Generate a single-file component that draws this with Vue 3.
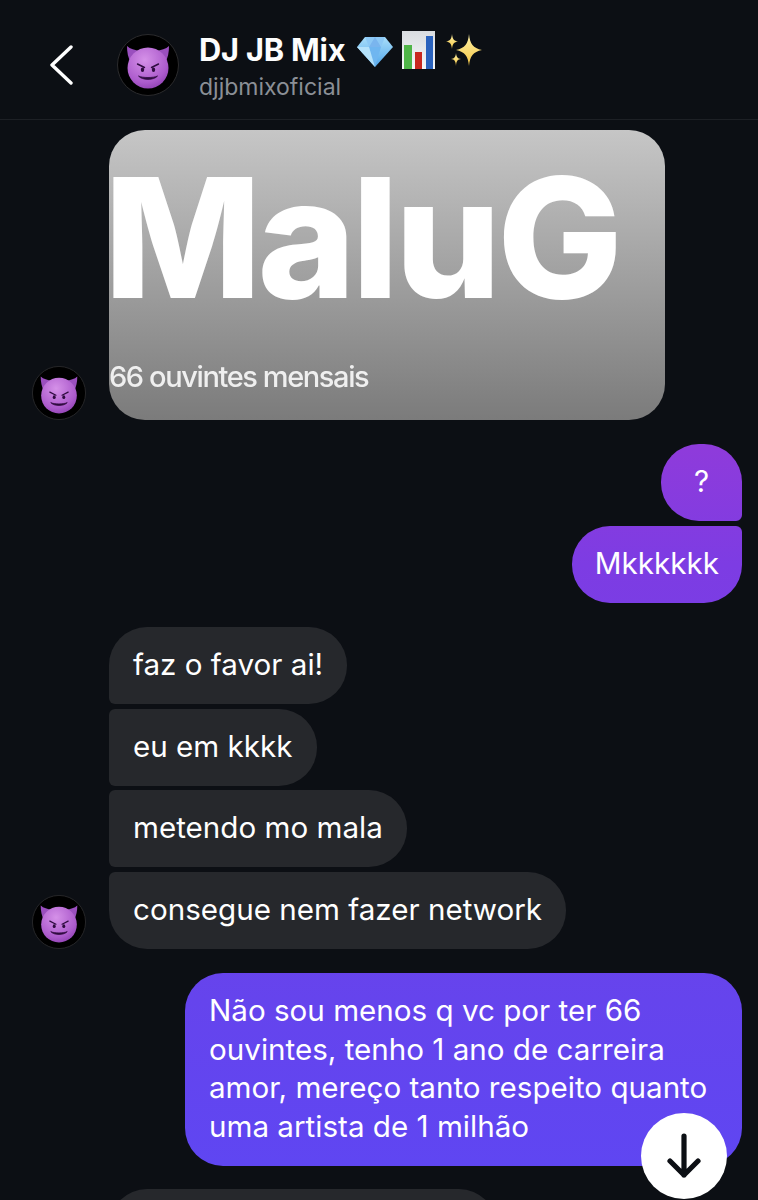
<template>
  <div class="screen">
    <svg class="defs" width="0" height="0" aria-hidden="true">
      <defs>
        <radialGradient id="faceFill" cx="0.42" cy="0.3" r="0.85">
          <stop offset="0" stop-color="#d591e8" />
          <stop offset="0.65" stop-color="#ac5bcc" />
          <stop offset="1" stop-color="#8234a6" />
        </radialGradient>
        <linearGradient id="gemFill" x1="0" y1="0" x2="0" y2="1">
          <stop offset="0" stop-color="#a9defa" />
          <stop offset="1" stop-color="#4fa5ea" />
        </linearGradient>
        <linearGradient id="starFill" x1="0" y1="0" x2="0" y2="1">
          <stop offset="0" stop-color="#fff2a8" />
          <stop offset="1" stop-color="#f5c542" />
        </linearGradient>
        <linearGradient id="chartFill" x1="0" y1="0" x2="0" y2="1">
          <stop offset="0" stop-color="#d9dce0" />
          <stop offset="1" stop-color="#f6f7f8" />
        </linearGradient>
        <symbol id="devil" viewBox="0 0 62 62">
          <circle cx="31" cy="31" r="30.5" fill="#000" stroke="#2b2b2d" />
          <path d="M10 12 C13 15 18 16 23 17 L14 29 C11 24 10 18 10 12Z" fill="#9a4fbe" />
          <path d="M52 12 C49 15 44 16 39 17 L48 29 C51 24 52 18 52 12Z" fill="#9a4fbe" />
          <circle cx="31" cy="34" r="20.5" fill="url(#faceFill)" />
          <path d="M20.500 30 L27.500 33.500 M41.500 30 L34.500 33.500" stroke="#2f0c40" stroke-width="1.400" stroke-linecap="round" />
          <ellipse cx="25.500" cy="35.800" rx="1.700" ry="2.200" fill="#2f0c40" />
          <ellipse cx="36.500" cy="35.800" rx="1.700" ry="2.200" fill="#2f0c40" />
          <path d="M21.500 42 C25 46.500 37 46.500 40.500 42 C37 44 25 44 21.500 42Z" fill="#2f0c40" stroke="#2f0c40" stroke-width="0.800" stroke-linejoin="round" />
        </symbol>
      </defs>
    </svg>

    <header class="topbar">
      <button class="back" type="button" aria-label="Voltar">
        <svg width="24" height="40" viewBox="0 0 24 40" fill="none">
          <path d="M22 2 L3 20 L22 38" stroke="#fff" stroke-width="3.400" stroke-linecap="round" stroke-linejoin="round" />
        </svg>
      </button>
      <svg class="avatar-lg"><use href="#devil" /></svg>
      <div class="who">
        <div class="title-row">
          <span class="title">DJ JB Mix</span>
          <svg class="gem" width="38" height="32" viewBox="0 0 38 32">
            <path d="M9 1 H29 L37 11 L19 31 L1 11Z" fill="url(#gemFill)" />
            <path d="M9 1 L13 11 H25 L29 1Z" fill="#8cc8f5" />
            <path d="M13 11 L19 31 L25 11Z" fill="#6fb6f0" />
            <path d="M1 11 H13 L19 31Z" fill="#b5e2fb" />
            <path d="M13 11 L19 1 L25 11Z" fill="#7ab5ee" />
          </svg>
          <svg class="chart" width="33" height="38" viewBox="0 0 33 38">
            <rect width="33" height="38" fill="url(#chartFill)" />
            <rect x="2" y="14" width="8" height="24" fill="#4fb548" />
            <rect x="13" y="21" width="7" height="17" fill="#c8281f" />
            <rect x="24" y="5" width="7" height="33" fill="#2a62bd" />
          </svg>
          <svg class="stars" width="37" height="34" viewBox="0 0 37 34" fill="url(#starFill)">
            <path d="M23 1 C24 11 27 15 36 17 C27 19 24 23 23 33 C22 23 19 19 10 17 C19 15 22 11 23 1Z" />
            <path d="M6 1 C6.500 6 8 8 12 8.500 C8 9 6.500 11 6 16 C5.500 11 4 9 0 8.500 C4 8 5.500 6 6 1Z" />
            <path d="M10 20 C10.400 24 11.500 25.500 15 26 C11.500 26.500 10.400 28 10 33 C9.600 28 8.500 26.500 5 26 C8.500 25.500 9.600 24 10 20Z" />
          </svg>
        </div>
        <div class="handle">djjbmixoficial</div>
      </div>
    </header>

    <main class="chat">
      <div class="row row-image">
        <svg class="avatar"><use href="#devil" /></svg>
        <div class="shared-card">
          <div class="artist">MaluG</div>
          <div class="listeners">66 ouvintes mensais</div>
        </div>
      </div>

      <div class="group group-out">
        <div class="bubble out first-out question">?</div>
        <div class="bubble out last-out">Mkkkkkk</div>
      </div>

      <div class="row row-in">
        <svg class="avatar"><use href="#devil" /></svg>
        <div class="group group-in">
          <div
            v-for="(msg, i) in incoming"
            :key="msg"
            class="bubble in"
            :class="{ 'first-in': i === 0, 'mid-in': i > 0 && i < incoming.length - 1, 'last-in': i === incoming.length - 1 }"
          >
            {{ msg }}
          </div>
        </div>
      </div>

      <div class="group group-out">
        <div class="bubble out long">Não sou menos q vc por ter 66 ouvintes, tenho 1 ano de carreira amor, mereço tanto respeito quanto uma artista de 1 milhão</div>
      </div>

      <div class="row row-next">
        <div class="avatar-space"></div>
        <div class="bubble in next">&nbsp;</div>
      </div>
    </main>

    <button class="scroll-down" type="button" aria-label="Ir para o fim">
      <svg width="34" height="46" viewBox="0 0 34 46" fill="none">
        <path d="M17 3 V42 M3 28 L17 42 L31 28" stroke="#0c0f14" stroke-width="5.200" stroke-linecap="round" stroke-linejoin="round" />
      </svg>
    </button>
  </div>
</template>

<script setup>
const incoming = [
  'faz o favor ai!',
  'eu em kkkk',
  'metendo mo mala',
  'consegue nem fazer network'
]
</script>

<style>
html,
body {
  margin: 0;
  background: #0c0f14;
}
</style>

<style scoped>
.screen {
  position: relative;
  width: 758px;
  height: 1200px;
  overflow: hidden;
  background: #0c0f14;
  color: #fff;
  font-family: Inter, "Liberation Sans", sans-serif;
}

.defs {
  position: absolute;
}

.topbar {
  display: flex;
  align-items: flex-start;
  height: 85px;
  padding: 34px 0 0 49px;
  border-bottom: 1px solid #1d2025;
}

.back {
  display: flex;
  padding: 0;
  margin: 11px 44px 0 0;
  background: none;
  border: none;
}

.avatar-lg {
  width: 62px;
  height: 62px;
  flex: none;
}

.who {
  margin-left: 20px;
}

.title-row {
  display: flex;
  align-items: center;
  height: 36px;
  margin-top: -2px;
}

.title {
  font-size: 30.800px;
  font-weight: 700;
  letter-spacing: -0.2px;
  line-height: 36px;
  margin-right: 11px;
  color: #fdfdfd;
}

.gem {
  margin: 4px 8px 0 0;
}

.chart {
  margin-right: 11px;
}

.handle {
  margin-top: 5px;
  font-size: 23px;
  line-height: 28px;
  color: #8b8f96;
}

.chat {
  display: flex;
  flex-direction: column;
  padding: 10px 16px 0 32px;
}

.row {
  display: flex;
  align-items: flex-end;
  gap: 23px;
}

.avatar,
.avatar-space {
  width: 54px;
  height: 54px;
  flex: none;
}

.shared-card {
  width: 556px;
  height: 290px;
  border-radius: 36px;
  background: linear-gradient(180deg, #c6c6c6 0%, #7b7b7b 100%);
}

.artist {
  margin: 6px 0 0 -5px;
  font-size: 167px;
  line-height: 202px;
  font-weight: 800;
  letter-spacing: -4px;
  color: #fff;
  white-space: nowrap;
  filter: blur(0.7px);
}

.listeners {
  margin-top: 24px;
  font-size: 29px;
  line-height: 30px;
  font-weight: 500;
  letter-spacing: -1.400px;
  color: #efefef;
  white-space: nowrap;
  filter: blur(0.6px);
}

.group {
  display: flex;
  flex-direction: column;
}

.group-out {
  align-items: flex-end;
  gap: 5px;
  margin-top: 24px;
}

.group-in {
  align-items: flex-start;
  gap: 4.500px;
}

.row-in {
  margin-top: 24px;
}

.bubble {
  min-height: 77px;
  box-sizing: border-box;
  padding: 18px 24px;
  font-size: 29.600px;
  line-height: 38.700px;
  border-radius: 38px;
}

.out {
  background: linear-gradient(180deg, #8e3bdb 450px, #7d3ce3 565px, #6544ed 1000px, #5f46f2 1166px) fixed;
}

.in {
  background: #26282c;
}

.question {
  width: 81px;
  padding: 18px 0;
  text-align: center;
}

.first-out {
  border-bottom-right-radius: 6px;
}

.last-out {
  padding-left: 23px;
  padding-right: 23px;
  border-top-right-radius: 6px;
}

.first-in {
  border-bottom-left-radius: 6px;
}

.mid-in {
  border-top-left-radius: 6px;
  border-bottom-left-radius: 6px;
}

.last-in {
  border-top-left-radius: 6px;
}

.long {
  width: 557px;
  padding-top: 18.500px;
  padding-bottom: 20.500px;
}

.row-next {
  margin-top: 23px;
}

.next {
  width: 388px;
}

.scroll-down {
  position: absolute;
  left: 641px;
  top: 1113px;
  display: flex;
  align-items: center;
  justify-content: center;
  width: 86px;
  height: 86px;
  padding: 0;
  border: none;
  border-radius: 50%;
  background: #fff;
}
</style>
